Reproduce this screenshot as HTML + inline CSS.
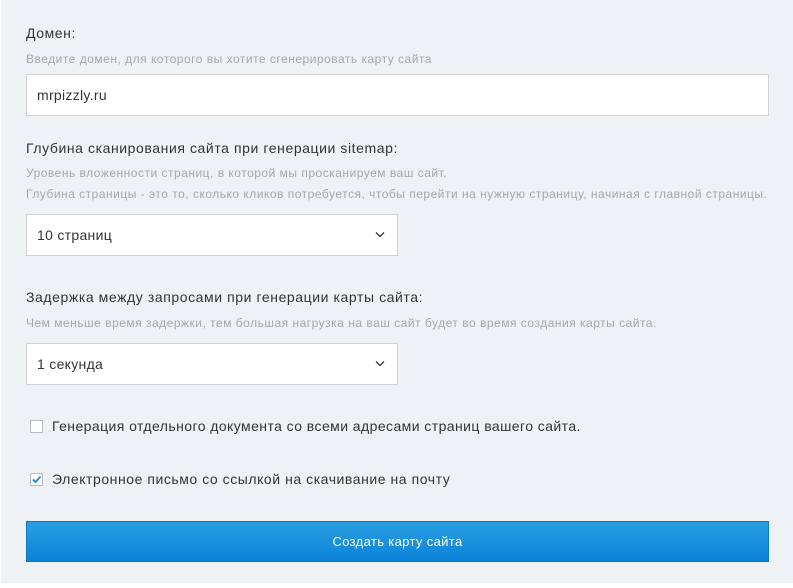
<!DOCTYPE html>
<html><head><meta charset="utf-8"><style>
*{margin:0;padding:0;box-sizing:border-box}
body{width:793px;height:588px;background:#fff;font-family:"Liberation Sans",sans-serif;position:relative;overflow:hidden}
.panel{position:absolute;left:1px;top:0;width:792px;height:583px;background:#eff2f5}
.t{position:absolute;left:26px;white-space:nowrap}
.lab{font-size:14px;color:#333;letter-spacing:0.58px}
.sub{font-size:12px;color:#a3a8ad;letter-spacing:0.5px}
.box{position:absolute;left:26px;background:#fff;border:1px solid #cfd3d7;font-size:14px;color:#333;padding-left:10px;display:flex;align-items:center;letter-spacing:0.3px}
.chev{position:absolute;right:12px;top:50%;margin-top:-4px}
.cb{position:absolute;left:30px;width:13px;height:13px;border:1px solid #b8bcc0;background:#fff}
.btn{position:absolute;left:26px;top:521px;width:743px;height:41px;background:linear-gradient(#2a9fe3,#0b82d8);border:1px solid #0f7ac6;color:#fff;font-size:13px;letter-spacing:0.35px;display:flex;align-items:center;justify-content:center}
</style></head><body>
<div class="panel"></div>
<div class="t lab" style="top:25px">Домен:</div>
<div class="t sub" style="top:52px">Введите домен, для которого вы хотите сгенерировать карту сайта</div>
<div class="box" style="top:74px;width:743px;height:42px">mrpizzly.ru</div>
<div class="t lab" style="top:140px">Глубина сканирования сайта при генерации sitemap:</div>
<div class="t sub" style="top:166px">Уровень вложенности страниц, в которой мы просканируем ваш сайт.</div>
<div class="t sub" style="top:187px">Глубина страницы - это то, сколько кликов потребуется, чтобы перейти на нужную страницу, начиная с главной страницы.</div>
<div class="box" style="top:214px;width:372px;height:42px">10 страниц<svg class="chev" width="10" height="7" viewBox="0 0 10 7"><path d="M1 1.5L5 5.5L9 1.5" fill="none" stroke="#333" stroke-width="1.3"/></svg></div>
<div class="t lab" style="top:289px">Задержка между запросами при генерации карты сайта:</div>
<div class="t sub" style="top:316px">Чем меньше время задержки, тем большая нагрузка на ваш сайт будет во время создания карты сайта.</div>
<div class="box" style="top:343px;width:372px;height:42px">1 секунда<svg class="chev" width="10" height="7" viewBox="0 0 10 7"><path d="M1 1.5L5 5.5L9 1.5" fill="none" stroke="#333" stroke-width="1.3"/></svg></div>
<div class="cb" style="top:420px"></div>
<div class="t lab" style="left:52px;top:418px;letter-spacing:0.43px">Генерация отдельного документа со всеми адресами страниц вашего сайта.</div>
<div class="cb" style="top:473px"><svg width="11" height="11" viewBox="0 0 11 11" style="position:absolute;left:0;top:0"><path d="M2 5.5L4.5 8L9.5 2.5" fill="none" stroke="#2a8fd8" stroke-width="2"/></svg></div>
<div class="t lab" style="left:52px;top:471px;letter-spacing:0.55px">Электронное письмо со ссылкой на скачивание на почту</div>
<div class="btn">Создать карту сайта</div>
</body></html>
